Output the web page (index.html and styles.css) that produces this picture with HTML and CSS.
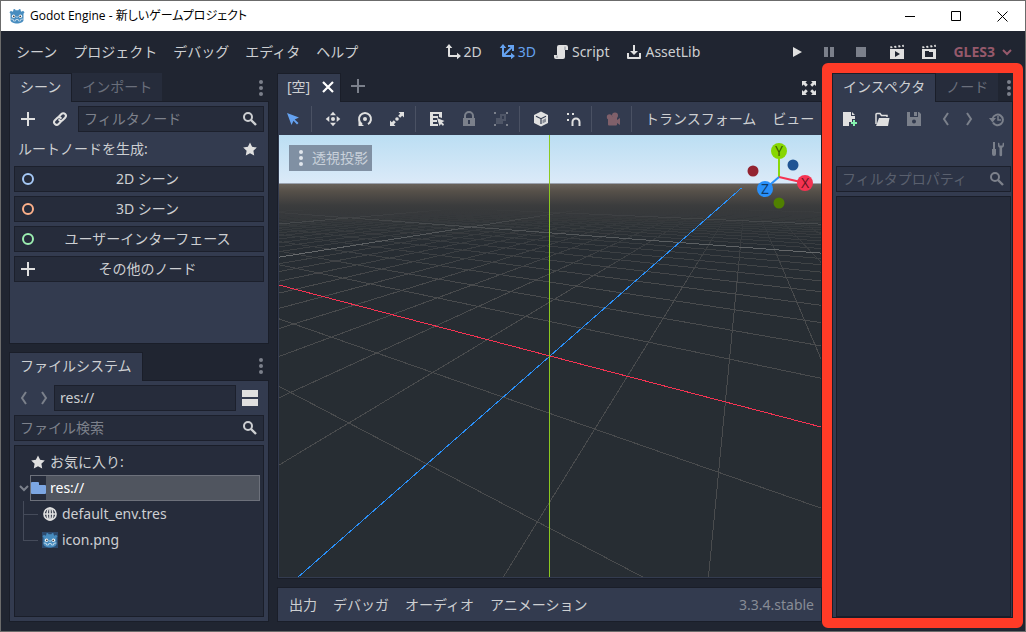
FILE: index.html
```html
<!DOCTYPE html>
<html lang="ja">
<head>
<meta charset="utf-8">
<title>Godot Engine - 新しいゲームプロジェクト</title>
<link rel="stylesheet" href="styles.css">
</head>
<body>
<svg class="sprites" aria-hidden="true">
  <symbol id="plus" viewBox="0 0 16 16"><path d="M7 1h2v6h6v2H9v6H7V9H1V7h6z"/></symbol>
  <symbol id="link" viewBox="0 0 16 16"><g fill="none" stroke="currentColor" stroke-width="2" stroke-linecap="round"><path d="M7.2 5.2 9.4 3a2.6 2.6 0 0 1 3.7 3.7l-2.3 2.3a2.6 2.6 0 0 1-3.6 0"/><path d="M8.8 10.8 6.6 13a2.6 2.6 0 0 1-3.7-3.7L5.200 7a2.600 2.600 0 0 1 3.600 0"/></g></symbol>
  <symbol id="search" viewBox="0 0 16 16"><circle cx="6" cy="6" r="4" fill="none" stroke="currentColor" stroke-width="2"/><path d="m9 9 5 5" stroke="currentColor" stroke-width="2.400"/></symbol>
  <symbol id="star" viewBox="0 0 16 16"><path d="m8 1.500 2.100 4.300 4.700.700-3.400 3.300.800 4.700L8 12.300l-4.200 2.200.800-4.700L1.200 6.500l4.700-.700z"/></symbol>
  <symbol id="ring" viewBox="0 0 16 16"><circle cx="8" cy="8" r="5" fill="none" stroke="currentColor" stroke-width="2"/></symbol>
  <symbol id="dots" viewBox="0 0 16 16"><circle cx="8" cy="2" r="2"/><circle cx="8" cy="8" r="2"/><circle cx="8" cy="14" r="2"/></symbol>
  <symbol id="back" viewBox="0 0 16 16"><path d="m10 2-4 6 4 6" fill="none" stroke="currentColor" stroke-width="2"/></symbol>
  <symbol id="forward" viewBox="0 0 16 16"><path d="m6 2 4 6-4 6" fill="none" stroke="currentColor" stroke-width="2"/></symbol>
  <symbol id="panels" viewBox="0 0 16 16"><path d="M0 0h16v7H0zM0 9h16v7H0z"/></symbol>
  <symbol id="chevron" viewBox="0 0 16 16"><path d="m4 6 4 4 4-4" fill="none" stroke="currentColor" stroke-width="2"/></symbol>
  <symbol id="folder" viewBox="0 0 16 16"><path d="M0 3a1 1 0 0 1 1-1h6a1 1 0 0 1 1 1v2h6a1 1 0 0 1 1 1v7a1 1 0 0 1-1 1H1a1 1 0 0 1-1-1z"/></symbol>
  <symbol id="globe" viewBox="0 0 16 16"><g fill="none" stroke="currentColor" stroke-width="1.700"><circle cx="8" cy="8" r="6"/><ellipse cx="8" cy="8" rx="2.800" ry="6"/><path d="M2 8h12M8 2v12"/></g></symbol>
  <symbol id="godot" viewBox="0 0 16 16"><path fill="#478cbf" d="m6 1 .5 1.300h3L10 1l1.700.500V3l1 .700 1.300-1 1.500 1.600-1 1.500v6.500C14.300 14.300 11 15.500 8 15.500s-6.300-1.200-6.500-3.200V5.800l-1-1.500L2 2.700l1.300 1 1-.700V1.500z"/><circle cx="4.600" cy="8.300" r="1.700" fill="#fff"/><circle cx="11.400" cy="8.300" r="1.700" fill="#fff"/><circle cx="4.800" cy="8.300" r=".9" fill="#414042"/><circle cx="11.200" cy="8.300" r=".9" fill="#414042"/><path d="M8 8v2M1.600 11l2.600.3.300 1.700h2l.3-1.500h2.400l.3 1.500h2l.3-1.700 2.600-.3" fill="none" stroke="#fff" stroke-width=".6"/></symbol>
  <symbol id="two-d" viewBox="0 0 16 16"><path d="M4 0 .700 4H3v8a1 1 0 0 0 1 1h8v2.300L16 12l-4-3.300V11H5V4h2.300z"/></symbol>
  <symbol id="three-d" viewBox="0 0 16 16"><path d="M4 0 .700 4H3v8a1 1 0 0 0 1 1h8v2.300L16 12l-4-3.300V11H6.400L13 4.400V7h2V1H9v2h2.600L5 9.600V4h2.300z"/></symbol>
  <symbol id="script" viewBox="0 0 16 16"><path d="M6 1a2 2 0 0 0-2 2v8H1v2a2 2 0 0 0 2 2h7a2 2 0 0 0 2-2V6h3V3a2 2 0 0 0-2-2z"/><path d="M12 2.500V6M4 11.500V14" stroke="#858a94"/></symbol>
  <symbol id="asset" viewBox="0 0 16 16"><path d="M7 1h2v6h3l-4 4-4-4h3zM1 9h2v4h10V9h2v5a1 1 0 0 1-1 1H2a1 1 0 0 1-1-1z"/></symbol>
  <symbol id="play" viewBox="0 0 16 16"><path d="M4 3v10l9-5z"/></symbol>
  <symbol id="pause" viewBox="0 0 16 16"><path d="M3 3h4v10H3zM9 3h4v10H9z"/></symbol>
  <symbol id="stop" viewBox="0 0 16 16"><path d="M3 3h10v10H3z"/></symbol>
  <symbol id="clap-play" viewBox="0 0 16 16"><path fill-rule="evenodd" d="M1 5h14v10H1zM6 7v6l5-3z"/><path d="m1 2.600 2-.300.700 1.800-2.200.200zM5 2.100l2-.300.700 1.800-2 .300zM9 1.600l2-.300.700 1.800-2 .300zM13 1l1.700-.200.300 2-1.500.200z"/></symbol>
  <symbol id="clap-folder" viewBox="0 0 16 16"><path fill-rule="evenodd" d="M1 5h14v10H1zM4 7v6h8V8H8V7z"/><path d="m1 2.600 2-.300.700 1.800-2.200.200zM5 2.100l2-.300.700 1.800-2 .300zM9 1.600l2-.300.700 1.800-2 .300zM13 1l1.700-.200.300 2-1.500.200z"/></symbol>
  <symbol id="close" viewBox="0 0 16 16"><path d="m3 3 10 10M13 3 3 13" stroke="currentColor" stroke-width="2.200"/></symbol>
  <symbol id="expand" viewBox="0 0 16 16"><path d="M1 1h5L4.500 2.500l2.300 2.300-2 2-2.300-2.300L1 6zM15 1v5l-1.500-1.500-2.300 2.300-2-2 2.300-2.300L10 1zM1 15v-5l1.500 1.500 2.300-2.300 2 2-2.300 2.300L6 15zM15 15h-5l1.500-1.500-2.300-2.300 2-2 2.300 2.300L15 10z"/></symbol>
  <symbol id="arrow" viewBox="0 0 16 16"><path d="m2 2 4.500 12 2-4.300L12 13.500l1.500-1.500-3.800-3.500L14 6.500z"/></symbol>
  <symbol id="move" viewBox="0 0 16 16"><path d="m8 .700 3 3.600H5zM8 15.300l3-3.600H5zM.700 8l3.600-3v6zM15.300 8l-3.600-3v6z"/><circle cx="8" cy="8" r="2"/></symbol>
  <symbol id="rotate" viewBox="0 0 16 16"><path d="M5 13.200A6 6 0 1 1 11 13.200" fill="none" stroke="currentColor" stroke-width="2"/><path d="M1.500 10v5h5.500z"/><circle cx="8" cy="8" r="2"/></symbol>
  <symbol id="scale" viewBox="0 0 16 16"><path d="M9.500 1H15v5.500l-1.800-1.800-2 2-2-2 2-2zM6.500 15H1V9.500l1.800 1.800 2-2 2 2-2 2z"/><circle cx="8" cy="8" r="1.800"/></symbol>
  <symbol id="list" viewBox="0 0 16 16"><path fill-rule="evenodd" d="M1 1h12v6l-3-1V3H4v2h5v2H4v2h4v2H4v2h5v2H1z"/><path d="m8 7 7.500 3-2.500 1.300 2 2L14 15l-2-2-1.500 2z"/></symbol>
  <symbol id="lock" viewBox="0 0 16 16"><path d="M4 7V5a4 4 0 0 1 8 0v2" fill="none" stroke="currentColor" stroke-width="2"/><path fill-rule="evenodd" d="M2 7h12v8H2zM7 9v4h2V9z"/></symbol>
  <symbol id="group" viewBox="0 0 16 16"><path opacity=".4" fill-rule="evenodd" d="M7 3h6v7h-3v3H3V7h4zM9 5v3h2V5z"/><path d="M1 1h2v2H1zM13 1h2v2h-2zM1 13h2v2H1zM13 13h2v2h-2z"/></symbol>
  <symbol id="cube" viewBox="0 0 16 16"><path d="m8 .500 7 3.500v8l-7 3.500L1 12V4z"/><path d="m3 5.200 5 2.500L13 5.200M8 7.700V13" fill="none" stroke="#333b4f" stroke-width="1.200"/><path fill="#333b4f" d="m9.500 9 3.500-1.700v3.500l-3.500 1.700z" opacity=".5"/></symbol>
  <symbol id="magnet" viewBox="0 0 16 16"><path d="M2 2h2v2H2zM7 2h2v2H7zM2 8h2v2H2z"/><path d="M7.500 15v-4a3.500 3.500 0 0 1 7 0v4" fill="none" stroke="currentColor" stroke-width="2"/></symbol>
  <symbol id="camera" viewBox="0 0 16 16"><circle cx="10" cy="4.500" r="3"/><circle cx="4.500" cy="6" r="2.700"/><path d="M3 6h9v3l3-2v7l-3-2v1.500a1 1 0 0 1-1 1H4a1 1 0 0 1-1-1z"/></symbol>
  <symbol id="new-file" viewBox="0 0 16 16"><path d="M1 1h8v4h4v3h-3v3H7v4H1zM10 1l3 3h-3z"/><path fill="#84f0ad" d="M11 9h2v2h2v2h-2v2h-2v-2H9v-2h2z"/></symbol>
  <symbol id="open" viewBox="0 0 16 16"><path d="M2 13V3.500a1 1 0 0 1 1-1h3l1.500 2H13V6" fill="none" stroke="currentColor" stroke-width="1.500"/><path d="M5 7h10.500l-1.500 8H2z"/></symbol>
  <symbol id="save" viewBox="0 0 16 16"><path fill-rule="evenodd" d="M1 1h3v5h8V1h1l2 2v12H1zM8 8.500a2 2 0 1 0 0 4 2 2 0 0 0 0-4z"/><path d="M8 1h3v4H8z"/></symbol>
  <symbol id="history" viewBox="0 0 16 16"><path d="M4 11.500A5.300 5.300 0 1 0 3.700 7" fill="none" stroke="currentColor" stroke-width="2"/><path d="M0 7h7l-3.500 4.500z"/><path d="M9 5v4h3" fill="none" stroke="currentColor" stroke-width="1.500"/></symbol>
  <symbol id="tools" viewBox="0 0 16 16"><path d="M4 1h2v7h1v5a2 2 0 0 1-4 0V8h1zM9 1.500v3a2.500 2.500 0 0 0 1.500 2.300V14a1.300 1.300 0 0 0 2.600 0V6.800A2.500 2.500 0 0 0 15 4.500v-3l-1.500 1v2h-3v-2z"/></symbol>
</svg>

<div class="window">
  <header class="titlebar">
    <svg class="icon"><use href="#godot"/></svg>
    <h1 class="title">Godot Engine - 新しいゲームプロジェクト</h1>
    <button class="win-btn" aria-label="最小化"><svg class="win-icon" viewBox="0 0 11 11"><path d="M0 5.500h10"/></svg></button>
    <button class="win-btn" aria-label="最大化"><svg class="win-icon" viewBox="0 0 11 11"><path d="M.5.500h9v9h-9z"/></svg></button>
    <button class="win-btn" aria-label="閉じる"><svg class="win-icon" viewBox="0 0 11 11"><path d="m.5.500 10 10M10.500.500l-10 10"/></svg></button>
  </header>

  <div class="menubar">
    <nav class="menus">
      <button>シーン</button><button>プロジェクト</button><button>デバッグ</button><button>エディタ</button><button>ヘルプ</button>
    </nav>
    <div class="modes">
      <button class="mode"><svg class="icon"><use href="#two-d"/></svg>2D</button>
      <button class="mode accent"><svg class="icon"><use href="#three-d"/></svg>3D</button>
      <button class="mode"><svg class="icon"><use href="#script"/></svg>Script</button>
      <button class="mode"><svg class="icon"><use href="#asset"/></svg>AssetLib</button>
    </div>
    <div class="run">
      <button class="tool" aria-label="実行"><svg class="icon"><use href="#play"/></svg></button>
      <button class="tool dim" aria-label="一時停止"><svg class="icon"><use href="#pause"/></svg></button>
      <button class="tool dim" aria-label="停止"><svg class="icon"><use href="#stop"/></svg></button>
      <button class="tool wide" aria-label="シーンを実行"><svg class="icon"><use href="#clap-play"/></svg></button>
      <button class="tool" aria-label="シーンを選択して実行"><svg class="icon"><use href="#clap-folder"/></svg></button>
      <button class="renderer">GLES3<svg class="icon"><use href="#chevron"/></svg></button>
    </div>
  </div>

  <main class="workspace">
    <div class="left">
      <section class="dock">
        <div class="tabs"><button class="tab active">シーン</button><button class="tab">インポート</button><button class="more" aria-label="ドックメニュー"><svg class="icon"><use href="#dots"/></svg></button></div>
        <div class="panel">
          <div class="row">
            <button class="tool" aria-label="ノードを追加"><svg class="icon"><use href="#plus"/></svg></button>
            <button class="tool" aria-label="シーンをインスタンス化"><svg class="icon"><use href="#link"/></svg></button>
            <label class="field"><input type="text" placeholder="フィルタノード" aria-label="フィルタノード"><svg class="icon"><use href="#search"/></svg></label>
          </div>
          <div class="row root-label"><span>ルートノードを生成:</span><button class="tool" aria-label="お気に入り"><svg class="icon"><use href="#star"/></svg></button></div>
          <button class="node-btn"><svg class="icon blue"><use href="#ring"/></svg><span>2D シーン</span></button>
          <button class="node-btn"><svg class="icon orange"><use href="#ring"/></svg><span>3D シーン</span></button>
          <button class="node-btn"><svg class="icon green"><use href="#ring"/></svg><span>ユーザーインターフェース</span></button>
          <button class="node-btn"><svg class="icon"><use href="#plus"/></svg><span>その他のノード</span></button>
        </div>
      </section>

      <section class="dock files">
        <div class="tabs"><button class="tab active">ファイルシステム</button><button class="more" aria-label="ドックメニュー"><svg class="icon"><use href="#dots"/></svg></button></div>
        <div class="panel">
          <div class="row">
            <button class="nav dim" aria-label="戻る"><svg class="icon"><use href="#back"/></svg></button>
            <button class="nav dim" aria-label="進む"><svg class="icon"><use href="#forward"/></svg></button>
            <label class="field"><input type="text" value="res://" aria-label="パス"></label>
            <button class="tool split" aria-label="分割モード"><svg class="icon"><use href="#panels"/></svg></button>
          </div>
          <label class="field"><input type="text" placeholder="ファイル検索" aria-label="ファイル検索"><svg class="icon"><use href="#search"/></svg></label>
          <ul class="tree">
            <li class="item"><span class="twisty"></span><svg class="icon"><use href="#star"/></svg>お気に入り:</li>
            <li class="item"><span class="twisty dim"><svg class="icon"><use href="#chevron"/></svg></span><span class="selected"><span class="thumb"><svg class="icon folder"><use href="#folder"/></svg></span>res://</span></li>
            <li class="item"><span class="branch"></span><svg class="icon"><use href="#globe"/></svg>default_env.tres</li>
            <li class="item"><span class="branch last"></span><span class="thumb image"><svg class="icon"><use href="#godot"/></svg></span>icon.png</li>
          </ul>
        </div>
      </section>
    </div>

    <div class="center">
      <section class="dock">
        <div class="tabs">
          <button class="tab active scene-tab">[空]<svg class="icon"><use href="#close"/></svg></button>
          <button class="tool add dim" aria-label="シーンを追加"><svg class="icon"><use href="#plus"/></svg></button>
          <button class="more bright" aria-label="集中モード"><svg class="icon"><use href="#expand"/></svg></button>
        </div>
        <div class="panel editor">
          <div class="toolbar">
            <button class="tool accent" aria-label="選択"><svg class="icon"><use href="#arrow"/></svg></button>
            <span class="sep"></span>
            <button class="tool" aria-label="移動"><svg class="icon"><use href="#move"/></svg></button>
            <button class="tool" aria-label="回転"><svg class="icon"><use href="#rotate"/></svg></button>
            <button class="tool" aria-label="拡縮"><svg class="icon"><use href="#scale"/></svg></button>
            <span class="sep"></span>
            <button class="tool" aria-label="リスト選択"><svg class="icon"><use href="#list"/></svg></button>
            <button class="tool dim" aria-label="ロック"><svg class="icon"><use href="#lock"/></svg></button>
            <button class="tool dim" aria-label="グループ化"><svg class="icon"><use href="#group"/></svg></button>
            <span class="sep"></span>
            <button class="tool" aria-label="ローカル空間"><svg class="icon"><use href="#cube"/></svg></button>
            <button class="tool" aria-label="スナップ"><svg class="icon"><use href="#magnet"/></svg></button>
            <span class="sep"></span>
            <button class="tool cam" aria-label="カメラ"><svg class="icon"><use href="#camera"/></svg></button>
            <span class="sep"></span>
            <button class="text-btn">トランスフォーム</button>
            <button class="text-btn">ビュー</button>
          </div>
          <div class="viewport">
            <svg class="scene" viewBox="0 0 542 442" preserveAspectRatio="xMidYMid slice">
              <defs>
                <linearGradient id="sky" x2="0" y2="1"><stop offset="0" stop-color="#bbdef3"/><stop offset="1" stop-color="#dbeaf8"/></linearGradient>
                <linearGradient id="ground" x2="0" y2="1"><stop offset="0" stop-color="#68625b"/><stop offset=".12" stop-color="#565049"/><stop offset=".35" stop-color="#3b3c3d"/><stop offset=".7" stop-color="#2d3236"/><stop offset="1" stop-color="#272d33"/></linearGradient>
                <linearGradient id="fade" gradientUnits="userSpaceOnUse" x1="0" y1="74" x2="0" y2="150"><stop offset="0" stop-color="#000"/><stop offset=".3" stop-color="#666"/><stop offset="1" stop-color="#fff"/></linearGradient>
                <mask id="haze" maskUnits="userSpaceOnUse" x="0" y="0" width="542" height="442"><path fill="url(#fade)" d="M0 0h542v442H0z"/></mask>
              </defs>
              <path fill="#272d33" d="M0 0h542v442H0z"/>
              <path fill="url(#sky)" d="M0 0h542v48H0z"/>
              <path fill="url(#ground)" d="M0 49h542v61H0z"/>
              <path fill="#9aa2ae" d="M0 48h542v1H0z"/>
              <g id="grid" mask="url(#haze)"></g>
              <g id="axes"></g>
              <path fill="#8bc920" d="M270 0h1v442h-1z"/>
            </svg>
            <button class="view-name"><svg class="icon"><use href="#dots"/></svg>透視投影</button>
            <svg class="gizmo" viewBox="0 0 78 70">
              <circle cx="10" cy="29" r="5.500" fill="#932330"/><circle cx="50" cy="23" r="5.500" fill="#205494"/><circle cx="36" cy="61" r="5.500" fill="#508000"/>
              <path d="M36 35V10" stroke="#8bd80a" stroke-width="2"/><path d="m36 35 26 6" stroke="#f53352" stroke-width="2"/><path d="M36 35 22 47" stroke="#2990fa" stroke-width="2"/>
              <circle cx="36" cy="9" r="8" fill="#87d602"/><circle cx="62" cy="41" r="8" fill="#f53352"/><circle cx="22" cy="47" r="8" fill="#2990fa"/>
              <text x="36" y="14">Y</text><text x="62" y="46">X</text><text x="22" y="52">Z</text>
            </svg>
          </div>
        </div>
      </section>
      <footer class="bottom">
        <button>出力</button><button>デバッガ</button><button>オーディオ</button><button>アニメーション</button>
        <span class="version">3.3.4.stable</span>
      </footer>
    </div>

    <section class="dock inspector">
      <div class="tabs"><button class="tab active">インスペクタ</button><button class="tab">ノード</button><button class="more" aria-label="ドックメニュー"><svg class="icon"><use href="#dots"/></svg></button></div>
      <div class="panel">
        <div class="row">
          <button class="tool" aria-label="新規リソース"><svg class="icon"><use href="#new-file"/></svg></button>
          <button class="tool" aria-label="リソースを開く"><svg class="icon"><use href="#open"/></svg></button>
          <button class="tool dim" aria-label="保存"><svg class="icon"><use href="#save"/></svg></button>
          <span class="push"></span>
          <button class="nav dim" aria-label="前へ"><svg class="icon"><use href="#back"/></svg></button>
          <button class="nav dim" aria-label="次へ"><svg class="icon"><use href="#forward"/></svg></button>
          <button class="tool dim" aria-label="履歴"><svg class="icon"><use href="#history"/></svg></button>
        </div>
        <div class="row"><span class="push"></span><button class="tool dim" aria-label="ツール"><svg class="icon"><use href="#tools"/></svg></button></div>
        <label class="field disabled"><input type="text" placeholder="フィルタプロパティ" aria-label="フィルタプロパティ"><svg class="icon"><use href="#search"/></svg></label>
        <div class="tree"></div>
      </div>
      <div class="highlight"></div>
    </section>
  </main>
</div>
<script src="scene.js"></script>
</body>
</html>
```
FILE: styles.css
```css
* { box-sizing: border-box; }
body {
  margin: 0;
  font: 14px/20px "Noto Sans", "Noto Sans CJK JP", sans-serif;
  color: #cdcfd2;
}
button, input {
  font: inherit;
  color: inherit;
  background: none;
  border: 0;
  padding: 0;
  margin: 0;
}
button { white-space: nowrap; }
.sprites { position: absolute; width: 0; height: 0; }
.icon { width: 16px; height: 16px; flex: none; display: block; fill: currentColor; }
.tool .icon, .node-btn .icon, .mode .icon, .item .icon, .bright .icon { color: #e0e0e0; }
.dim .icon.icon { color: #7b808b; }
.accent, .accent .icon.icon { color: #65a2f0; }
.cam .icon.icon { color: #80606a; }
.icon.blue.blue { color: #a5c8f5; }
.icon.orange.orange { color: #fcb08a; }
.icon.green.green { color: #9beeb0; }

.window {
  height: 100vh;
  display: flex;
  flex-direction: column;
  background: #202531;
  border: 1px solid #6b6b6b;
}
.titlebar {
  height: 30px;
  flex: none;
  display: flex;
  align-items: center;
  padding-left: 8px;
  background: #fff;
  color: #000;
}
.title {
  flex: 1;
  margin: 0 0 0 5px;
  font: 12px/16px "Open Sans", "Noto Sans CJK JP", sans-serif;
  font-feature-settings: "palt";
}
.win-btn { width: 46px; height: 30px; display: grid; place-items: center; }
.win-icon { width: 11px; height: 11px; fill: none; stroke: #000; }

.menubar {
  height: 42px;
  flex: none;
  display: flex;
  align-items: center;
  justify-content: space-between;
  padding: 0 8px 0 15px;
}
.menus { display: flex; gap: 16px; }
.modes { display: flex; gap: 17px; padding-left: 3px; }
.mode { display: flex; align-items: center; gap: 3px; }
.run { display: flex; align-items: center; gap: 4px; }
.tool { width: 28px; height: 26px; display: grid; place-items: center; flex: none; }
.tool.wide { width: 32px; padding-left: 4px; }
.renderer { display: flex; align-items: center; gap: 4px; padding-left: 6px; margin-right: 2px; font-weight: 700; color: #96596b; }

.workspace {
  flex: 1;
  min-height: 0;
  display: grid;
  grid-template-columns: 260px minmax(0, 1fr) 183px;
  gap: 8px;
  padding: 0 12px 9px 8px;
}
.left, .center { display: flex; flex-direction: column; gap: 8px; min-height: 0; }
.dock { flex: 1; min-height: 0; display: flex; flex-direction: column; }
.tabs { height: 29px; flex: none; display: flex; margin-bottom: -1px; z-index: 1; }
.tab {
  height: 28px;
  padding: 0 10px;
  background: #262c3b;
  color: #6a6f7b;
}
.tab.active {
  height: 29px;
  padding: 0 10px 2px;
  background: #333b4f;
  color: #cdcfd2;
  border: 1px solid #1a1e29;
  border-bottom: 0;
}
.tab.scene-tab { display: flex; align-items: center; gap: 10px; padding: 0 4px 2px 9px; }
.scene-tab .icon { color: #fff; }
.more { margin-left: auto; width: 16px; display: grid; place-items: center; color: #7b808b; }
.more.bright { margin-right: 5px; }
.add { width: 34px; }
.panel {
  flex: 1;
  min-height: 0;
  display: flex;
  flex-direction: column;
  gap: 4px;
  padding: 4px;
  background: #333b4f;
  border: 1px solid #1a1e29;
}
.row { display: flex; align-items: center; gap: 4px; }
.row > .field { flex: 1; }
.root-label { justify-content: space-between; padding-left: 4px; }
.field {
  height: 26px;
  min-width: 0;
  display: flex;
  align-items: center;
  padding: 0 5px;
  background: #262c3b;
  border: 1px solid #1c202c;
}
.field input { flex: 1; min-width: 0; width: 0; outline: 0; }
.field input::placeholder { color: #7d818b; opacity: 1; }
.field.disabled { background: #2c3345; color: #7d818b; }
.field.disabled input::placeholder { color: #5a606e; }
.node-btn {
  height: 26px;
  flex: none;
  display: flex;
  align-items: center;
  padding: 0 4px 0 5px;
  background: #262c3b;
  border: 1px solid #1c202c;
}
.node-btn span { flex: 1; }
.nav { width: 20px; height: 26px; display: grid; place-items: center; }
.files .nav { width: 16px; padding-left: 2px; }
.tool.split { width: 24px; padding-right: 4px; }
.push { flex: 1; }

.tree {
  flex: 1;
  min-height: 0;
  margin: 0;
  padding: 3px;
  list-style: none;
  background: #262c3b;
  border: 1px solid #1a1e29;
}
.item { height: 26px; display: flex; align-items: center; gap: 4px; }
.twisty { width: 8px; display: flex; justify-content: center; padding-left: 4px; }
.selected {
  flex: 1;
  height: 26px;
  display: flex;
  align-items: center;
  gap: 4px;
  background: #50555f;
  border: 1px solid #6d717b;
  color: #fff;
}
.thumb { height: 24px; display: grid; place-items: center; background: #262c3b; }
.selected .thumb { width: 15px; overflow: hidden; }
.thumb.image { height: 16px; background: #2d4a6e; }
.item .icon.folder { color: #7ca6e2; }
.branch {
  width: 18px;
  height: 26px;
  margin-left: 2px;
  background: linear-gradient(#454b5a, #454b5a) 3px 13px / 15px 1px no-repeat,
              linear-gradient(#454b5a, #454b5a) 3px 0 / 1px 100% no-repeat;
}
.branch.last { background-size: 15px 1px, 1px 13px; }

.panel.editor { padding: 0; gap: 0; }
.toolbar { height: 33px; flex: none; display: flex; align-items: center; gap: 4px; padding-left: 1px; overflow: hidden; }
.sep { width: 4px; height: 26px; flex: none; border-left: 1px solid #4a5163; }
.text-btn { flex: none; padding: 0 6px; line-height: 22px; }
.viewport { flex: 1; min-height: 0; position: relative; margin: 0 0 1px 1px; overflow: hidden; }
.scene { display: block; width: 100%; height: 100%; }
.view-name {
  position: absolute;
  left: 10px;
  top: 10px;
  height: 26px;
  display: flex;
  align-items: center;
  gap: 3px;
  padding: 0 4px;
  background: #8090a3;
  color: #c9d1da;
}
.view-name .icon { color: #e0e6ec; }
.gizmo { position: absolute; right: 0; top: 7px; width: 78px; height: 70px; }
.gizmo text { font-size: 14px; text-anchor: middle; fill: #00000099; }

.bottom {
  height: 35px;
  flex: none;
  display: flex;
  align-items: center;
  gap: 16px;
  padding: 0 7px 0 11px;
  background: #333b4f;
  border: 1px solid #1a1e29;
}
.version { margin-left: auto; color: #878c96; }

.inspector { position: relative; margin: 0 0 4px 2px; }
.inspector .panel { padding: 4px 1px 0 3px; }
.inspector .more { margin-right: -4px; }
.highlight {
  position: absolute;
  inset: -10px;
  z-index: 2;
  border: 10px solid #ff3b27;
  border-radius: 6px;
  pointer-events: none;
}
```
FILE: scene.js
```js
// Perspective view of the floor grid: 70 degree camera orbiting the origin.
const F = 221 / Math.tan(35 * Math.PI / 180);
const PITCH = 0.5, YAW = 0.5, DIST = 4, NEAR = 0.05;
const sp = Math.sin(PITCH), cp = Math.cos(PITCH), sy = Math.sin(YAW), cy = Math.cos(YAW);

function toCamera(x, z) {
  const away = -x * sy - z * cy;
  return [x * cy - z * sy, away * sp, DIST + away * cp];
}

function line(parent, from, to, color) {
  let a = toCamera(...from), b = toCamera(...to);
  if (a[2] < NEAR && b[2] < NEAR) return;
  if (a[2] < NEAR) [a, b] = [b, a];
  if (b[2] < NEAR) {
    const t = (a[2] - NEAR) / (a[2] - b[2]);
    b = a.map((v, i) => v + (b[i] - v) * t);
  }
  const el = document.createElementNS('http://www.w3.org/2000/svg', 'line');
  el.setAttribute('x1', 271 + F * a[0] / a[2]);
  el.setAttribute('y1', 221 - F * a[1] / a[2]);
  el.setAttribute('x2', 271 + F * b[0] / b[2]);
  el.setAttribute('y2', 221 - F * b[1] / b[2]);
  el.setAttribute('stroke', color);
  el.setAttribute('shape-rendering', 'crispEdges');
  parent.appendChild(el);
}

const grid = document.getElementById('grid');
const axes = document.getElementById('axes');
const N = 50;
for (const major of [false, true]) {
  for (let i = -N; i <= N; i++) {
    if (i === 0 || (i % 10 === 0) !== major) continue;
    const color = major ? '#8c8d8d' : '#494b4d';
    line(grid, [i, -N], [i, N], color);
    line(grid, [-N, i], [N, i], color);
  }
}
line(axes, [-200, 0], [200, 0], '#f53352');
line(axes, [0, -200], [0, 200], '#2990fa');
```
